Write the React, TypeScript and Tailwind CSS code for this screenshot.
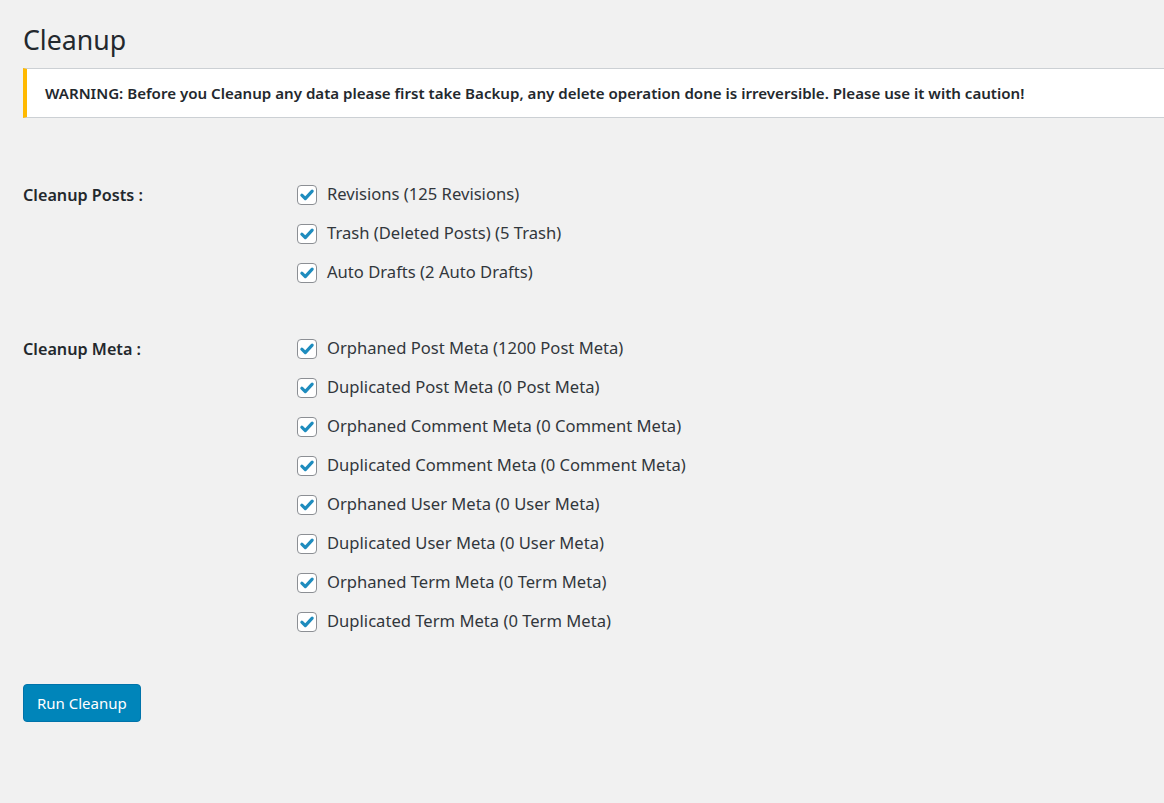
import React from "react";

const posts = [
  "Revisions (125 Revisions)",
  "Trash (Deleted Posts) (5 Trash)",
  "Auto Drafts (2 Auto Drafts)",
];
const meta = [
  "Orphaned Post Meta (1200 Post Meta)",
  "Duplicated Post Meta (0 Post Meta)",
  "Orphaned Comment Meta (0 Comment Meta)",
  "Duplicated Comment Meta (0 Comment Meta)",
  "Orphaned User Meta (0 User Meta)",
  "Duplicated User Meta (0 User Meta)",
  "Orphaned Term Meta (0 Term Meta)",
  "Duplicated Term Meta (0 Term Meta)",
];

function Check() {
  return (
    <span className="w-[20px] h-[20px] shrink-0 rounded-[4px] border border-[#8c8f94] bg-white flex items-center justify-center">
      <svg width="18" height="18" viewBox="0 0 16 16">
        <path d="M3.4 8.2 L6.5 11.2 L12.6 4.6" fill="none" stroke="#1e8cbe" strokeWidth="2.8" strokeLinecap="round" strokeLinejoin="round" />
      </svg>
    </span>
  );
}

function Row({ label, items }: { label: string; items: string[] }) {
  return (
    <div className="flex">
      <div className="w-[274px] shrink-0 font-semibold text-[16.2px] pt-[8px] h-[39px]">{label}</div>
      <div className="flex flex-col">
        {items.map((t) => (
          <label key={t} className="flex items-center gap-[10px] h-[39px]">
            <Check />
            <span className="text-[#32373c]">{t}</span>
          </label>
        ))}
      </div>
    </div>
  );
}

export default function App() {
  return (
    <div
      className="min-h-[803px] bg-[#f1f1f1] text-[#23282d] pl-[23px] overflow-hidden"
      style={{ fontFamily: '"Noto Sans", sans-serif' }}
    >
      <h1 className="text-[26.7px] font-normal leading-[36px] pt-[22px] pb-[10px]">Cleanup</h1>
      <div className="bg-white border border-[#ccd0d4] border-l-[4px] border-l-[#ffb900] mr-[-4px] h-[50px] flex items-center pl-[18px] text-[15.1px] font-semibold">
        WARNING: Before you Cleanup any data please first take Backup, any delete operation done is irreversible. Please use it with caution!
      </div>
      <div className="text-[16.6px] mt-[57px] flex flex-col gap-[37px]">
        <Row label="Cleanup Posts :" items={posts} />
        <Row label="Cleanup Meta :" items={meta} />
      </div>
      <button className="mt-[43px] h-[38px] px-[13px] rounded-[4px] bg-[#0085ba] border border-[#0073aa] text-white text-[15px]">
        Run Cleanup
      </button>
    </div>
  );
}
